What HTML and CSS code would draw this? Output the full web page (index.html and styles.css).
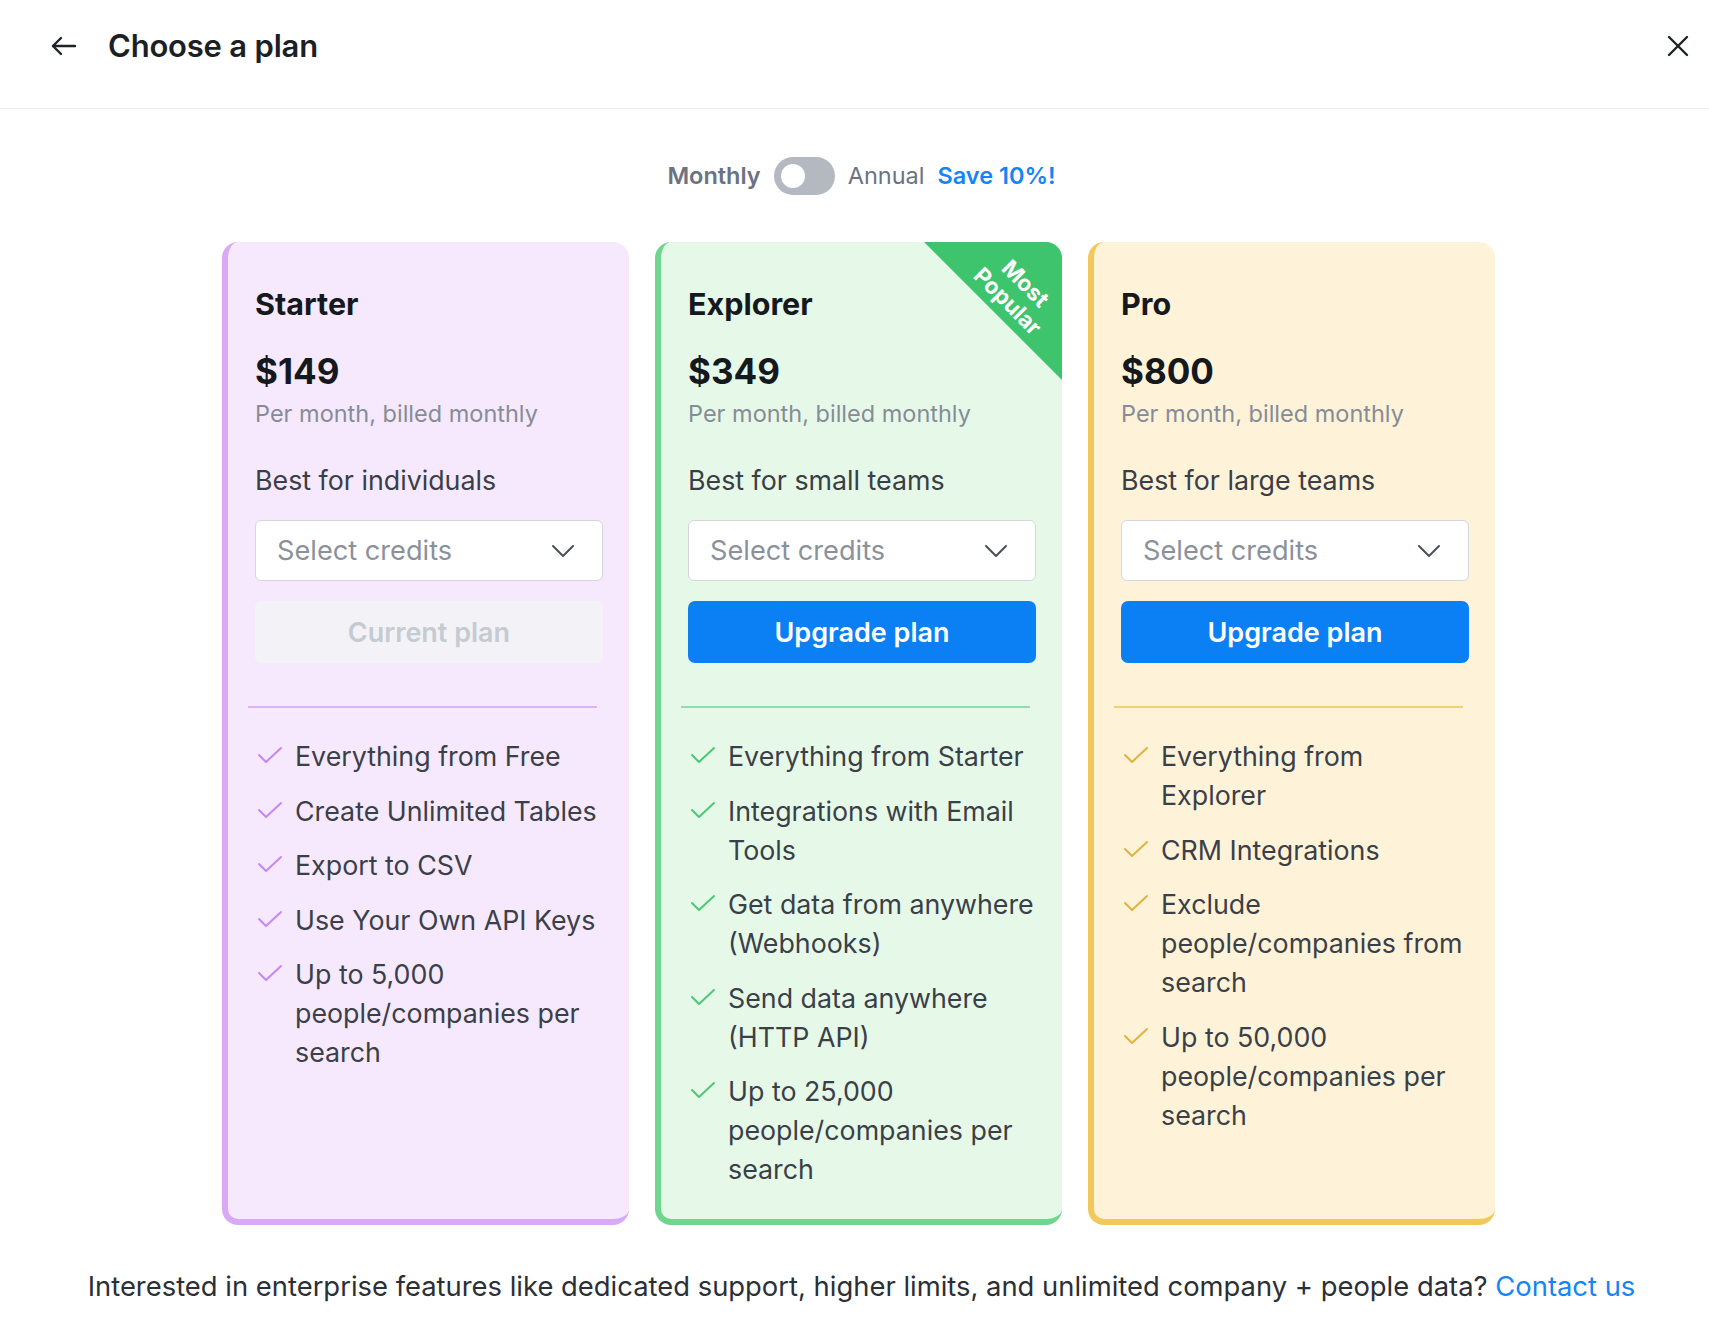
FILE: index.html
```html
<!DOCTYPE html>
<html lang="en">
<head>
<meta charset="utf-8">
<title>Choose a plan</title>
<link rel="stylesheet" href="styles.css">
</head>
<body>
<header class="topbar">
  <button class="icon-btn back-btn" aria-label="Back">
    <svg width="26" height="20" viewBox="0 0 26 20" fill="none" stroke="#1f2328" stroke-width="2.4" stroke-linecap="round" stroke-linejoin="round"><path d="M24 10H2"/><path d="M10 2L2 10l8 8"/></svg>
  </button>
  <h1 class="topbar-title">Choose a plan</h1>
  <button class="icon-btn close-btn" aria-label="Close">
    <svg width="22" height="22" viewBox="0 0 22 22" fill="none" stroke="#1f2328" stroke-width="2.4" stroke-linecap="round"><path d="M2 2l18 18"/><path d="M20 2L2 20"/></svg>
  </button>
</header>

<main class="content">
  <div class="billing">
    <span class="billing-monthly">Monthly</span>
    <span class="switch"><span class="switch-knob"></span></span>
    <span class="billing-annual">Annual</span>
    <span class="billing-save">Save 10%!</span>
  </div>

  <div class="plans">
    <section class="plan plan-starter">
      <h2 class="plan-name">Starter</h2>
      <div class="plan-price">$149</div>
      <div class="plan-billing">Per month, billed monthly</div>
      <div class="plan-for">Best for individuals</div>
      <div class="select">
        <span class="select-text">Select credits</span>
        <svg class="chev" width="24" height="14" viewBox="0 0 24 14" fill="none" stroke="#4b5058" stroke-width="2" stroke-linecap="round" stroke-linejoin="round"><path d="M2 2l10 10 10-10"/></svg>
      </div>
      <div class="btn btn-current">Current plan</div>
      <hr class="plan-divider">
      <ul class="features">
        <li><svg class="check" viewBox="0 0 26 18" fill="none" stroke-width="2" stroke-linecap="round" stroke-linejoin="round"><path d="M2 9l7 7L24 2"/></svg><span>Everything from Free</span></li>
        <li><svg class="check" viewBox="0 0 26 18" fill="none" stroke-width="2" stroke-linecap="round" stroke-linejoin="round"><path d="M2 9l7 7L24 2"/></svg><span>Create Unlimited Tables</span></li>
        <li><svg class="check" viewBox="0 0 26 18" fill="none" stroke-width="2" stroke-linecap="round" stroke-linejoin="round"><path d="M2 9l7 7L24 2"/></svg><span>Export to CSV</span></li>
        <li><svg class="check" viewBox="0 0 26 18" fill="none" stroke-width="2" stroke-linecap="round" stroke-linejoin="round"><path d="M2 9l7 7L24 2"/></svg><span>Use Your Own API Keys</span></li>
        <li><svg class="check" viewBox="0 0 26 18" fill="none" stroke-width="2" stroke-linecap="round" stroke-linejoin="round"><path d="M2 9l7 7L24 2"/></svg><span>Up to 5,000 people/companies per search</span></li>
      </ul>
    </section>

    <section class="plan plan-explorer">
      <div class="ribbon"><span class="ribbon-text">Most<br>Popular</span></div>
      <h2 class="plan-name">Explorer</h2>
      <div class="plan-price">$349</div>
      <div class="plan-billing">Per month, billed monthly</div>
      <div class="plan-for">Best for small teams</div>
      <div class="select">
        <span class="select-text">Select credits</span>
        <svg class="chev" width="24" height="14" viewBox="0 0 24 14" fill="none" stroke="#4b5058" stroke-width="2" stroke-linecap="round" stroke-linejoin="round"><path d="M2 2l10 10 10-10"/></svg>
      </div>
      <div class="btn btn-upgrade">Upgrade plan</div>
      <hr class="plan-divider">
      <ul class="features">
        <li><svg class="check" viewBox="0 0 26 18" fill="none" stroke-width="2" stroke-linecap="round" stroke-linejoin="round"><path d="M2 9l7 7L24 2"/></svg><span>Everything from Starter</span></li>
        <li><svg class="check" viewBox="0 0 26 18" fill="none" stroke-width="2" stroke-linecap="round" stroke-linejoin="round"><path d="M2 9l7 7L24 2"/></svg><span>Integrations with Email Tools</span></li>
        <li><svg class="check" viewBox="0 0 26 18" fill="none" stroke-width="2" stroke-linecap="round" stroke-linejoin="round"><path d="M2 9l7 7L24 2"/></svg><span>Get data from anywhere (Webhooks)</span></li>
        <li><svg class="check" viewBox="0 0 26 18" fill="none" stroke-width="2" stroke-linecap="round" stroke-linejoin="round"><path d="M2 9l7 7L24 2"/></svg><span>Send data anywhere (HTTP API)</span></li>
        <li><svg class="check" viewBox="0 0 26 18" fill="none" stroke-width="2" stroke-linecap="round" stroke-linejoin="round"><path d="M2 9l7 7L24 2"/></svg><span>Up to 25,000 people/companies per search</span></li>
      </ul>
    </section>

    <section class="plan plan-pro">
      <h2 class="plan-name">Pro</h2>
      <div class="plan-price">$800</div>
      <div class="plan-billing">Per month, billed monthly</div>
      <div class="plan-for">Best for large teams</div>
      <div class="select">
        <span class="select-text">Select credits</span>
        <svg class="chev" width="24" height="14" viewBox="0 0 24 14" fill="none" stroke="#4b5058" stroke-width="2" stroke-linecap="round" stroke-linejoin="round"><path d="M2 2l10 10 10-10"/></svg>
      </div>
      <div class="btn btn-upgrade">Upgrade plan</div>
      <hr class="plan-divider">
      <ul class="features">
        <li><svg class="check" viewBox="0 0 26 18" fill="none" stroke-width="2" stroke-linecap="round" stroke-linejoin="round"><path d="M2 9l7 7L24 2"/></svg><span>Everything from Explorer</span></li>
        <li><svg class="check" viewBox="0 0 26 18" fill="none" stroke-width="2" stroke-linecap="round" stroke-linejoin="round"><path d="M2 9l7 7L24 2"/></svg><span>CRM Integrations</span></li>
        <li><svg class="check" viewBox="0 0 26 18" fill="none" stroke-width="2" stroke-linecap="round" stroke-linejoin="round"><path d="M2 9l7 7L24 2"/></svg><span>Exclude people/companies from search</span></li>
        <li><svg class="check" viewBox="0 0 26 18" fill="none" stroke-width="2" stroke-linecap="round" stroke-linejoin="round"><path d="M2 9l7 7L24 2"/></svg><span>Up to 50,000 people/companies per search</span></li>
      </ul>
    </section>
  </div>

  <p class="enterprise">Interested in enterprise features like dedicated support, higher limits, and unlimited company + people data? <a class="contact" href="#">Contact us</a></p>
</main>
</body>
</html>
```

FILE: styles.css
```css
* { box-sizing: border-box; }

html, body {
  margin: 0;
  padding: 0;
  background: #ffffff;
}

body {
  font-family: Inter, "Noto Sans", "Liberation Sans", sans-serif;
  color: #1f2328;
}

.topbar {
  height: 109px;
  display: flex;
  align-items: center;
  padding: 0 20px 17px 51px;
  border-bottom: 1px solid #eceef2;
}

.icon-btn {
  background: none;
  border: 0;
  padding: 0;
  display: flex;
  align-items: center;
  justify-content: center;
  cursor: pointer;
}

.back-btn { width: 26px; height: 20px; }

.topbar-title {
  margin: 0 0 0 31px;
  font-size: 31px;
  font-weight: 600;
  letter-spacing: -0.2px;
  color: #1c1f24;
  flex: 1;
}

.close-btn { width: 22px; height: 22px; }

.content {
  padding-left: 14px;
}

.billing {
  display: flex;
  align-items: center;
  justify-content: center;
  gap: 13px;
  margin-top: 47px;
  height: 39px;
  font-size: 23.5px;
}

.billing-monthly {
  font-weight: 600;
  color: #6b7280;
}

.switch {
  width: 61px;
  height: 38px;
  border-radius: 19px;
  background: #b3b8c1;
  display: flex;
  align-items: center;
  padding-left: 7px;
}

.switch-knob {
  width: 24px;
  height: 24px;
  border-radius: 50%;
  background: #ffffff;
}

.billing-annual {
  color: #6b7280;
}

.billing-save {
  font-weight: 600;
  color: #1584f4;
}

.plans {
  display: grid;
  grid-template-columns: repeat(3, 407px);
  column-gap: 26px;
  justify-content: center;
  margin-top: 47px;
  padding-right: 6px;
}

.plan {
  position: relative;
  overflow: hidden;
  border-radius: 16px;
  border-left: 6px solid;
  border-bottom: 6px solid;
  padding: 45px 26px 30px 27px;
  display: flex;
  flex-direction: column;
}

.plan-starter { background: #f6e9fd; border-color: #d9a9f8; }
.plan-explorer { background: #e6f9e9; border-color: #6fd690; }
.plan-pro { background: #fef3d9; border-color: #f3c85b; }

.plan-name {
  margin: 0;
  font-size: 30.5px;
  line-height: 34px;
  font-weight: 700;
  color: #15181d;
}

.plan-price {
  margin-top: 29px;
  font-size: 35px;
  line-height: 42px;
  font-weight: 700;
  color: #15181d;
}

.plan-billing {
  margin-top: 7px;
  font-size: 23.5px;
  line-height: 30px;
  color: #868c97;
}

.plan-for {
  margin-top: 33px;
  font-size: 26.8px;
  line-height: 36px;
  color: #3a3e46;
}

.select {
  margin-top: 22px;
  height: 61px;
  background: #ffffff;
  border: 1.5px solid #d3d6dc;
  border-radius: 6px;
  display: flex;
  align-items: center;
  justify-content: space-between;
  padding: 0 27px 0 21px;
}

.select-text {
  font-size: 27.2px;
  color: #8b919b;
}

.btn {
  margin-top: 20px;
  height: 62px;
  border-radius: 7px;
  display: flex;
  align-items: center;
  justify-content: center;
  font-size: 27px;
  font-weight: 600;
}

.btn-current {
  background: #f3f3f7;
  color: #c6cad1;
}

.btn-upgrade {
  background: #0b7ff4;
  color: #ffffff;
}

.plan-divider {
  margin: 43px 6px 0 -7px;
  border: 0;
  height: 2px;
}

.plan-starter .plan-divider { background: #ddb3f8; }
.plan-explorer .plan-divider { background: #8fe0a6; }
.plan-pro .plan-divider { background: #f4cf74; }

.features {
  list-style: none;
  margin: 29px -3px 0 0;
  padding: 0;
  display: flex;
  flex-direction: column;
  gap: 15.5px;
}

.features li {
  display: flex;
  align-items: flex-start;
  font-size: 26.8px;
  line-height: 39px;
  color: #3b3f47;
}

.check {
  flex: none;
  width: 26px;
  height: 18px;
  margin: 9px 12px 0 2px;
}

.plan-starter .check { stroke: #c586f6; }
.plan-explorer .check { stroke: #4cc875; }
.plan-pro .check { stroke: #e0b23e; }

.ribbon {
  position: absolute;
  top: 0;
  right: 0;
  width: 138px;
  height: 138px;
  background: #3ec46c;
  clip-path: polygon(0 0, 100% 0, 100% 100%);
}

.ribbon-text {
  position: absolute;
  left: 93px;
  top: 50px;
  transform: translate(-50%, -50%) rotate(45deg);
  color: #ffffff;
  font-size: 22.5px;
  font-weight: 700;
  line-height: 25px;
  text-align: center;
  white-space: nowrap;
}

.enterprise {
  margin: 43px 0 0 0;
  text-align: center;
  font-size: 27.4px;
  line-height: 36px;
  color: #2b2f36;
}

.contact {
  color: #1584f4;
  text-decoration: none;
}
```
